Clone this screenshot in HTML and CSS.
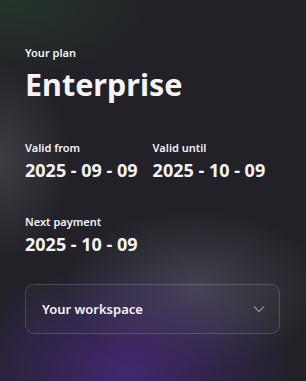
FILE: index.html
```html
<!DOCTYPE html>
<html lang="en">
<head>
  <meta charset="UTF-8">
  <meta name="viewport" content="width=device-width, initial-scale=1.0">
  <title>Your plan</title>
  <link rel="stylesheet" href="styles.css">
</head>
<body>
  <div class="card">
    <div class="plan">
      <small>Your plan</small>
      <h1>Enterprise</h1>
    </div>
    <div class="datas">
      <div class="campo">
        <small>Valid from</small>
        <strong>2025 - 09 - 09</strong>
      </div>
      <div class="campo">
        <small>Valid until</small>
        <strong>2025 - 10 - 09</strong>
      </div>
    </div>
    <div class="campo proximo">
      <small>Next payment</small>
      <strong>2025 - 10 - 09</strong>
    </div>
    <button class="workspace">
      <span>Your workspace</span>
      <svg width="12" height="8" viewBox="0 0 12 8"><path d="M1 1.5l5 5 5-5" fill="none" stroke="#8a879a" stroke-width="1.3"/></svg>
    </button>
  </div>
</body>
</html>
```

FILE: styles.css
```css
body {
  margin: 0;
  width: 306px;
  height: 381px;
  overflow: hidden;
  font-family: "Noto Sans", sans-serif;
  color: #f4f4f6;
  background:
    radial-gradient(ellipse 170px 110px at 125px 372px, rgba(70,40,120,0.9), transparent),
    radial-gradient(ellipse 130px 80px at 195px 290px, rgba(88,85,100,0.65), transparent),
    radial-gradient(ellipse 70px 100px at 0px 160px, rgba(80,80,85,0.6), transparent),
    radial-gradient(ellipse 150px 80px at 10px 0px, rgba(38,58,42,0.8), transparent),
    #212127;
}
.card {
  padding: 46px 25px 0 25px;
}
small {
  display: block;
  font-size: 11px;
  font-weight: 600;
  line-height: 14px;
}
h1 {
  margin: 6px 0 0;
  font-size: 30.5px;
  font-weight: 700;
  line-height: 36px;
}
.datas {
  display: flex;
  gap: 15px;
  margin-top: 39px;
}
.campo strong {
  display: block;
  margin-top: 4px;
  font-size: 18px;
  font-weight: 700;
  line-height: 22px;
}
.proximo {
  margin-top: 34px;
}
.workspace {
  margin-top: 29px;
  width: 255px;
  height: 50px;
  display: flex;
  align-items: center;
  justify-content: space-between;
  padding: 0 14px 0 16px;
  background: rgba(255,255,255,0.02);
  border: 1px solid rgba(255,255,255,0.16);
  border-radius: 9px;
  color: #f4f4f6;
  font-family: inherit;
  font-size: 13px;
  font-weight: 600;
}
```
